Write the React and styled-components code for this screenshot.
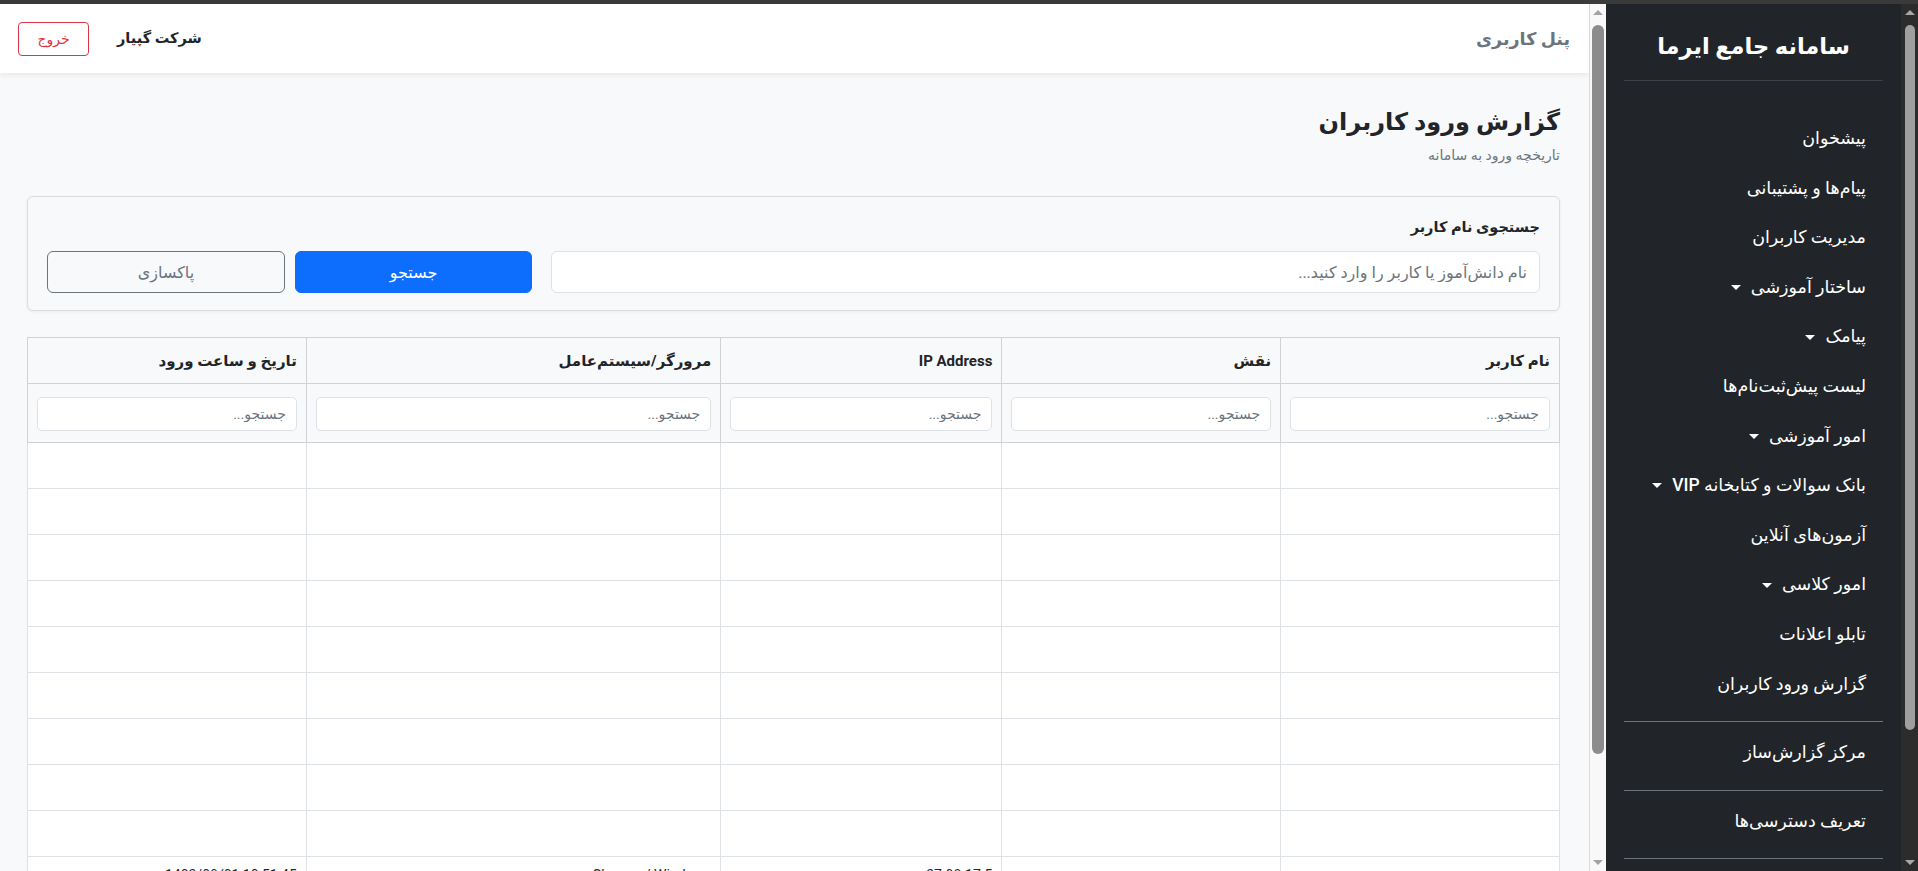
import React from "react";
import styled, { createGlobalStyle } from "styled-components";

const GlobalStyle = createGlobalStyle`
  * { box-sizing: border-box; }
  html, body { margin: 0; height: 100%; overflow: hidden; }
  body {
    font-family: Roboto, "DejaVu Sans", sans-serif;
    color: #212529;
  }
  #root { height: 100%; }
`;

const Shell = styled.div`
  height: 100vh;
  display: flex;
  flex-direction: column;
`;

const TopStrip = styled.div`
  height: 4px;
  flex-shrink: 0;
  background: #3a3a3a;
`;

const Frame = styled.div`
  flex: 1;
  min-height: 0;
  display: flex;
  direction: rtl;
`;

// اسکرول‌بار ظاهری (فقط نمایشی)
const ScrollTrack = styled.div`
  width: 17px;
  flex-shrink: 0;
  display: flex;
  flex-direction: column;
  background: ${(p) => (p.$dark ? "#2c2c2c" : "#f8f8f8")};
  border-left: 1px solid ${(p) => (p.$dark ? "#2c2c2c" : "#dadada")};
`;

const ScrollArrow = styled.div`
  height: 17px;
  flex-shrink: 0;
  display: flex;
  align-items: center;
  justify-content: center;
  &::before {
    content: "";
    width: 0;
    height: 0;
    border-left: 5px solid transparent;
    border-right: 5px solid transparent;
    ${(p) => (p.$down ? "border-top" : "border-bottom")}: 5px solid
      ${(p) => (p.$dark ? "#a8a8a8" : "#a3a3a3")};
  }
`;

const ThumbArea = styled.div`
  flex: 1;
  padding: 4px 0 0;
`;

const Thumb = styled.div`
  height: ${(p) => p.$size};
  margin: 0 ${(p) => (p.$dark ? "3px" : "2px")};
  border-radius: 7px;
  background: ${(p) => (p.$dark ? "#9f9f9f" : "#8c8c8c")};
`;

function FakeScrollbar({ dark, size }) {
  return (
    <ScrollTrack $dark={dark}>
      <ScrollArrow $dark={dark} />
      <ThumbArea>
        <Thumb $dark={dark} $size={size} />
      </ThumbArea>
      <ScrollArrow $dark={dark} $down />
    </ScrollTrack>
  );
}

// سایدبار تیره
const Sidebar = styled.aside`
  width: 312px;
  flex-shrink: 0;
  display: flex;
  direction: ltr;
  background: #212529;
  color: #fff;
`;

const SideBody = styled.div`
  flex: 1;
  min-width: 0;
  overflow: hidden;
  direction: rtl;
`;

const Brand = styled.div`
  padding-top: 24px;
  line-height: 36px;
  font-size: 22.5px;
  font-weight: 700;
  text-align: center;
  margin-bottom: 16px;
`;

const Divider = styled.div`
  height: 1px;
  margin: ${(p) => (p.$top ? "0 18px" : "12px 18px 6px")};
  background: ${(p) => (p.$top ? "#3d4248" : "#6c737a")};
`;

const Nav = styled.nav`
  padding-top: ${(p) => (p.$first ? "33px" : "0")};
`;

const NavItem = styled.div`
  display: flex;
  align-items: center;
  gap: 10px;
  padding: 12px 35px 12px 16px;
  font-size: 17.5px;
  font-weight: 500;
  line-height: 25.6px;
  color: #fff;
  white-space: nowrap;
`;

const Caret = styled.span`
  display: inline-block;
  width: 0;
  height: 0;
  border-top: 5px solid #fff;
  border-left: 5px solid transparent;
  border-right: 5px solid transparent;
`;

// بخش اصلی
const Main = styled.main`
  flex: 1;
  min-width: 0;
  display: flex;
  direction: ltr;
  background: #f8f9fa;
`;

const MainBody = styled.div`
  flex: 1;
  min-width: 0;
  overflow: hidden;
  direction: rtl;
`;

const Header = styled.header`
  height: 69px;
  background: #fff;
  box-shadow: 0 2px 6px rgba(0, 0, 0, 0.08);
  display: flex;
  align-items: center;
  justify-content: space-between;
  padding: 0 19px 0 18px;
`;

const PanelTitle = styled.div`
  font-size: 17.5px;
  font-weight: 700;
  color: #6c757d;
`;

const HeaderSide = styled.div`
  display: flex;
  align-items: center;
  gap: 28px;
`;

const Company = styled.div`
  font-size: 14.5px;
  font-weight: 700;
  color: #212529;
`;

const LogoutButton = styled.button`
  width: 71px;
  height: 34px;
  border: 1px solid #dc3545;
  border-radius: 4px;
  background: transparent;
  color: #dc3545;
  font: inherit;
  font-size: 14px;
`;

const Content = styled.div`
  padding: 32px 29px 37px 27px;
`;

const PageTitle = styled.h1`
  margin: 0;
  font-size: 24px;
  font-weight: 700;
  line-height: 34px;
`;

const Subtitle = styled.p`
  margin: 6px 0 0;
  font-size: 14px;
  line-height: 21px;
  color: #6c757d;
`;

const SearchCard = styled.section`
  margin-top: 30px;
  padding: 20px 19px 17px 19px;
  border: 1px solid #d9dde1;
  border-radius: 6px;
  background: #f8f9fa;
  box-shadow: 0 1px 3px rgba(0, 0, 0, 0.06);
`;

const Label = styled.div`
  font-size: 14.5px;
  font-weight: 700;
  line-height: 22px;
  margin-bottom: 12px;
`;

const SearchRow = styled.div`
  display: grid;
  grid-template-columns: 1fr 237px 238px;
  column-gap: 10px;
`;

const TextInput = styled.input`
  height: 42px;
  margin-left: 9px;
  padding: 0 12px;
  border: 1px solid #dee2e6;
  border-radius: 6px;
  background: #fff;
  font: inherit;
  font-size: 16px;
  color: #212529;
  &::placeholder { color: #6c757d; }
`;

const Button = styled.button`
  height: 42px;
  border-radius: 6px;
  font: inherit;
  font-size: 16px;
  font-weight: ${(p) => (p.$primary ? 500 : 400)};
  border: 1px solid ${(p) => (p.$primary ? "#0d6efd" : "#6c757d")};
  background: ${(p) => (p.$primary ? "#0d6efd" : "transparent")};
  color: ${(p) => (p.$primary ? "#fff" : "#6c757d")};
`;

const Table = styled.table`
  margin-top: 26px;
  width: 100%;
  border-collapse: collapse;
  table-layout: fixed;
  border: 1px solid #cfd3d7;
`;

const HeadCell = styled.th`
  height: 46px;
  padding: 0 9px;
  text-align: right;
  font-size: 15px;
  font-weight: 700;
  background: #f8f9fa;
  border: 1px solid #cfd3d7;
`;

const FilterCell = styled.td`
  height: 58px;
  padding: 13px 9px 11px;
  background: #f8f9fa;
  border: 1px solid #cfd3d7;
`;

const FilterInput = styled.input`
  width: 100%;
  height: 34px;
  padding: 0 10px;
  border: 1px solid #dee2e6;
  border-radius: 5px;
  background: #fff;
  font: inherit;
  font-size: 14px;
  &::placeholder { color: #6c757d; }
`;

const Cell = styled.td`
  height: 46px;
  padding: 8px 9px;
  vertical-align: top;
  line-height: 21px;
  background: #fff;
  border: 1px solid #dee2e6;
  font-size: 14px;
  text-align: right;
  direction: ${(p) => (p.$ltr ? "ltr" : "rtl")};
`;

const menuTop = [
  { label: "پیشخوان" },
  { label: "پیام‌ها و پشتیبانی" },
  { label: "مدیریت کاربران" },
  { label: "ساختار آموزشی", caret: true },
  { label: "پیامک", caret: true },
  { label: "لیست پیش‌ثبت‌نام‌ها" },
  { label: "امور آموزشی", caret: true },
  { label: "بانک سوالات و کتابخانه VIP", caret: true },
  { label: "آزمون‌های آنلاین" },
  { label: "امور کلاسی", caret: true },
  { label: "تابلو اعلانات" },
  { label: "گزارش ورود کاربران" },
];

const menuBottom = ["مرکز گزارش‌ساز", "تعریف دسترسی‌ها", "تنظیمات سامانه"];

const columns = [
  { title: "نام کاربر", width: "18.2%" },
  { title: "نقش", width: "18.2%" },
  { title: "IP Address", width: "18.35%" },
  { title: "مرورگر/سیستم‌عامل", width: "27.05%" },
  { title: "تاریخ و ساعت ورود", width: "18.2%" },
];

const rows = [
  ...Array.from({ length: 9 }, () => null),
  ["مدیر سیستم", "مدیر", "37.98.17.5", "Chrome / Windows", "1403/08/01 10:51:45"],
];

export default function App() {
  return (
    <>
      <GlobalStyle />
      <Shell>
        <TopStrip />
        <Frame>
          <Sidebar>
            <SideBody>
              <Brand>سامانه جامع ایرما</Brand>
              <Divider $top />
              <Nav $first>
                {menuTop.map((item) => (
                  <NavItem key={item.label}>
                    {item.label}
                    {item.caret && <Caret />}
                  </NavItem>
                ))}
              </Nav>
              {menuBottom.map((label) => (
                <React.Fragment key={label}>
                  <Divider />
                  <Nav>
                    <NavItem>{label}</NavItem>
                  </Nav>
                </React.Fragment>
              ))}
            </SideBody>
            <FakeScrollbar dark size="705px" />
          </Sidebar>

          <Main>
            <MainBody>
              <Header>
                <PanelTitle>پنل کاربری</PanelTitle>
                <HeaderSide>
                  <Company>شرکت گپیار</Company>
                  <LogoutButton>خروج</LogoutButton>
                </HeaderSide>
              </Header>

              <Content>
                <PageTitle>گزارش ورود کاربران</PageTitle>
                <Subtitle>تاریخچه ورود به سامانه</Subtitle>

                <SearchCard>
                  <Label>جستجوی نام کاربر</Label>
                  <SearchRow>
                    <TextInput placeholder="نام دانش‌آموز یا کاربر را وارد کنید..." />
                    <Button $primary>جستجو</Button>
                    <Button>پاکسازی</Button>
                  </SearchRow>
                </SearchCard>

                <Table>
                  <colgroup>
                    {columns.map((c) => (
                      <col key={c.title} style={{ width: c.width }} />
                    ))}
                  </colgroup>
                  <thead>
                    <tr>
                      {columns.map((c) => (
                        <HeadCell key={c.title}>{c.title}</HeadCell>
                      ))}
                    </tr>
                    <tr>
                      {columns.map((c) => (
                        <FilterCell key={c.title}>
                          <FilterInput placeholder="جستجو..." />
                        </FilterCell>
                      ))}
                    </tr>
                  </thead>
                  <tbody>
                    {rows.map((r, i) => (
                      <tr key={i}>
                        {columns.map((c, j) => (
                          <Cell key={c.title} $ltr={j === 2 || j === 4}>
                            {r ? r[j] : ""}
                          </Cell>
                        ))}
                      </tr>
                    ))}
                  </tbody>
                </Table>
              </Content>
            </MainBody>
            <FakeScrollbar size="729px" />
          </Main>
        </Frame>
      </Shell>
    </>
  );
}
